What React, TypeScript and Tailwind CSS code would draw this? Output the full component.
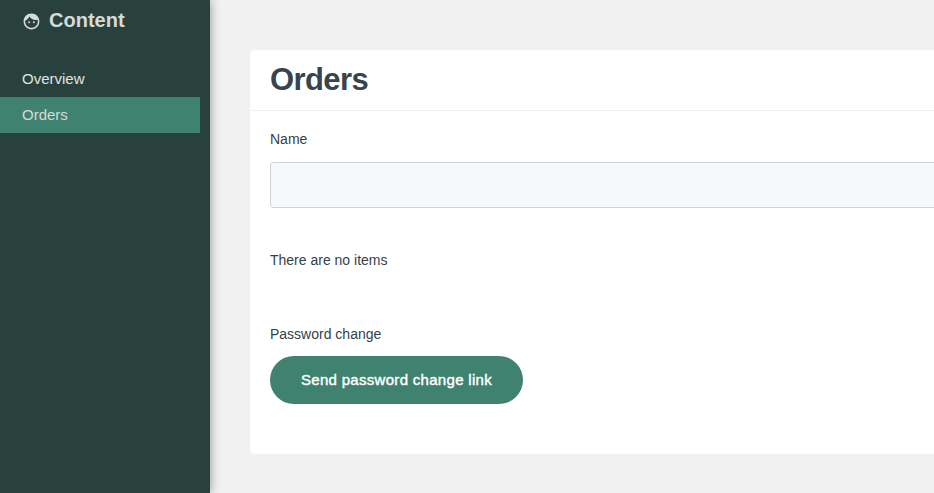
import { MdFace } from "react-icons/md"

const links = [
  { label: "Overview", active: false },
  { label: "Orders", active: true },
]

export default function App() {
  return (
    <div className="flex h-screen overflow-hidden bg-[#f1f1f1] font-['Liberation_Sans',Arial,sans-serif] text-[#333f47]">
      <aside className="z-10 w-[210px] shrink-0 bg-[#29413c] text-[#d6dad9] shadow-[0_0_10px_rgba(0,0,0,0.4)]">
        <div className="flex h-10 items-center gap-2 pl-[22px]">
          <MdFace className="mt-[3px] size-[19px]" />
          <h2 className="text-[20px] font-bold">Content</h2>
        </div>
        <nav className="mt-[21px] mr-[10px]">
          {links.map((link) => (
            <a
              key={link.label}
              href="#"
              className={`flex h-9 items-center pl-[22px] text-[15px] ${link.active ? "bg-[#408270]" : "text-[#e0e3e2]"}`}
            >
              {link.label}
            </a>
          ))}
        </nav>
      </aside>

      <main className="min-w-0 flex-1 pt-[50px] pl-10">
        <section className="h-[404px] w-[760px] rounded-[5px] bg-white">
          <header className="flex h-[61px] items-center border-b border-[#f1f1f1] px-5">
            <h1 className="text-[31px] leading-[58px] font-bold tracking-[-0.6px] text-[#38444c]">Orders</h1>
          </header>
          <div className="px-5 pt-[18px] text-[14px]">
            <label htmlFor="name" className="block h-[33px] leading-5">Name</label>
            <input id="name" className="block h-[46px] w-full rounded-[3px] border border-[#ced3da] bg-[#f6f8fa] px-4 outline-none" />
            <p className="mt-[42px] leading-5">There are no items</p>
            <p className="mt-[54px] leading-5">Password change</p>
            <button className="mt-3 h-12 w-[253px] rounded-full bg-[#408270] text-[15px] font-medium tracking-[0.3px] text-white [-webkit-text-stroke:0.4px_white]">
              Send password change link
            </button>
          </div>
        </section>
      </main>
    </div>
  )
}
